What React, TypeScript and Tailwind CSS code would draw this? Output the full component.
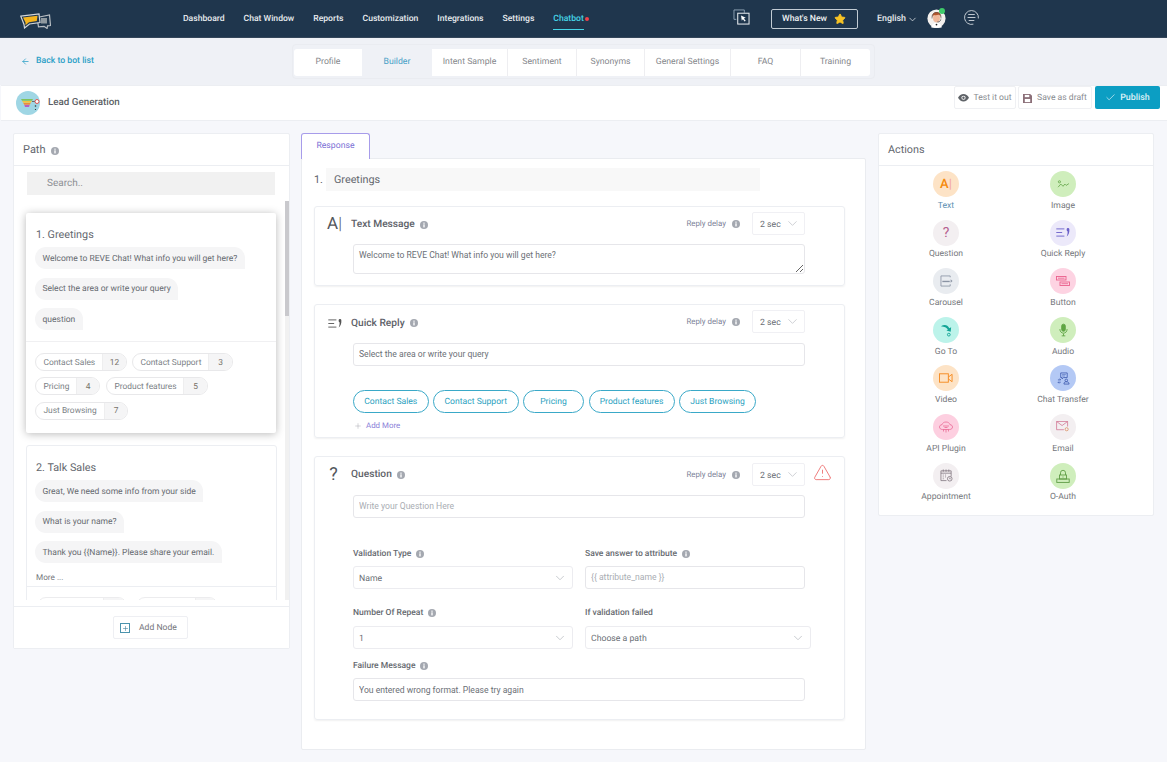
import React from 'react';
import { ArrowLeft, Check, ChevronDown, Plus, Star, TriangleAlert } from 'lucide-react';

const navItems = ['Dashboard', 'Chat Window', 'Reports', 'Customization', 'Integrations', 'Settings'];

const tabs = [
  { label: 'Profile', width: 'w-[68px]', active: false },
  { label: 'Builder', width: 'w-[70px]', active: true },
  { label: 'Intent Sample', width: 'w-[76px]', active: false },
  { label: 'Sentiment', width: 'w-[69px]', active: false },
  { label: 'Synonyms', width: 'w-[68px]', active: false },
  { label: 'General Settings', width: 'w-[86px]', active: false },
  { label: 'FAQ', width: 'w-[70px]', active: false },
  { label: 'Training', width: 'w-[69px]', active: false },
];

function Info({ className = '' }: { className?: string }) {
  return (
    <svg viewBox="0 0 12 12" className={`w-[8px] h-[8px] shrink-0 ${className}`}>
      <circle cx="6" cy="6" r="6" fill="#a4a8b0" />
      <rect x="5" y="5" width="2" height="4.6" fill="#fff" />
      <rect x="5" y="2.4" width="2" height="1.7" fill="#fff" />
    </svg>
  );
}

function QuickIcon({ color = '#555' }: { color?: string }) {
  return (
    <svg viewBox="0 0 16 10" className="w-[15px] h-[9px]" fill="none">
      <path d="M0 1h9M0 5h6.5M0 9h9" stroke={color} strokeWidth="1" />
      <path d="M11.500 1.500a1.500 1.500 0 113 0c.3 3.500-.8 6.500-3 8 .9-1.800 1.200-3.500 1-5.800-.7-.1-1-.9-1-2.200z" fill={color} />
    </svg>
  );
}

function Logo() {
  return (
    <svg viewBox="0 0 31 16" className="w-[31px] h-[16px]">
      <path d="M17 4.500L29.500 2l1 10.500-3 .4-.4 2.600-3-2.200-5.600.6z" fill="#1f364d" stroke="#b9bfc4" strokeWidth="1.200" />
      <rect x="21" y="5" width="6" height="5.500" fill="#8f999f" />
      <path d="M.8 3.200L19 .8l1 8.700-10.500 1.500-5 4-.5-3.500z" fill="#1f364d" stroke="#d5d8da" strokeWidth="1.200" />
      <path d="M3 4.500L17.500 2.800 16.800 8 9 9.300 5.500 12.300V9.500z" fill="#f6b51e" />
    </svg>
  );
}

function Avatar() {
  return (
    <svg viewBox="0 0 22 22" className="w-[19px] h-[19px]">
      <circle cx="11" cy="11" r="10.500" fill="#f4f1ee" />
      <path d="M5 21c0-4 3-5.500 6-5.500s6 1.500 6 5.500c-3.500 1.500-8.500 1.500-12 0z" fill="#fff" stroke="#ddd" strokeWidth=".4" />
      <ellipse cx="11" cy="10.500" rx="4" ry="5" fill="#efb89a" />
      <path d="M6.300 10c-.8-4.500 2-6.500 5-6.500 3.200 0 5.200 2.500 4.400 6.500-.3-2-1.300-3-2.500-3.300-1.700.6-3.700.6-5 .2-.9.6-1.600 1.600-1.900 3.100z" fill="#b5562b" />
      <path d="M5.800 11V9c0-6.500 10.400-6.500 10.400 0v2" fill="none" stroke="#555" strokeWidth=".7" />
      <path d="M16 12c-.5 2.500-2 3-4 3" fill="none" stroke="#333" strokeWidth=".8" />
      <circle cx="11" cy="18" r="1" fill="#222" />
    </svg>
  );
}

function LeadIcon() {
  return (
    <svg viewBox="0 0 24 24" className="w-[24px] h-[24px]">
      <circle cx="12" cy="12" r="12" fill="#9fd6e4" />
      <path d="M5 8h12l-1 1.800H6z" fill="#7fc25a" />
      <path d="M6.200 10h9.600l-.9 1.800H7.100z" fill="#f5c33b" />
      <path d="M7.300 12h7.400l-.9 1.800H8.200z" fill="#ee8a3a" />
      <path d="M8.400 14h5.200L13 16H9z" fill="#b65fc0" />
      <path d="M16 10.500h4" stroke="#444" strokeWidth=".7" />
      <circle cx="21" cy="10.500" r="2" fill="#fff" stroke="#e0544f" strokeWidth="1" />
      <circle cx="19.500" cy="15" r=".8" fill="#333" />
      <circle cx="19.500" cy="18.500" r=".6" fill="#222" />
    </svg>
  );
}

const actions: { label: string; bg: string; icon: React.ReactNode }[] = [
  {
    label: 'Text',
    bg: 'bg-[#fde3c6]',
    icon: <span className="font-medium text-[13px] leading-none text-[#f58a0c]">A<span className="text-[#f4a3a3] font-normal">|</span></span>,
  },
  {
    label: 'Image',
    bg: 'bg-[#cfeebc]',
    icon: (
      <svg viewBox="0 0 14 10" className="w-[13px] h-[9px]" fill="none" stroke="#63a548" strokeWidth=".9">
        <circle cx="2.500" cy="2" r="1.200" />
        <path d="M1 8l3-3.500 2.500 2.500 2-2.500 1.500 1.500 3-2" />
      </svg>
    ),
  },
  {
    label: 'Question',
    bg: 'bg-[#f3eff1]',
    icon: <span className="text-[14px] leading-none text-[#b55d8e]">?</span>,
  },
  { label: 'Quick Reply', bg: 'bg-[#ece9fa]', icon: <QuickIcon color="#6a5fc8" /> },
  {
    label: 'Carousel',
    bg: 'bg-[#e9ecf0]',
    icon: (
      <svg viewBox="0 0 14 13" className="w-[13px] h-[12px]" fill="none" stroke="#8a93a3" strokeWidth=".9">
        <path d="M11 2.500V1H1v11h10v-2" />
        <path d="M2.500 7h8" strokeWidth="1.500" />
        <path d="M11.500 4.500L13.500 6.500l-2 2z" fill="#8a93a3" stroke="none" />
      </svg>
    ),
  },
  {
    label: 'Button',
    bg: 'bg-[#fdd3e2]',
    icon: (
      <svg viewBox="0 0 14 10" className="w-[14px] h-[10px]" fill="none" stroke="#ea5f8c" strokeWidth=".9">
        <rect x=".5" y=".5" width="9.500" height="3.500" />
        <rect x="4" y="6" width="9.500" height="3.500" />
        <path d="M2 2.200h6.500M5.500 7.700H12" strokeWidth=".8" />
      </svg>
    ),
  },
  {
    label: 'Go To',
    bg: 'bg-[#bcf3ea]',
    icon: (
      <svg viewBox="0 0 14 14" className="w-[13px] h-[14px]" fill="none">
        <path d="M1 3c4-2.500 7-1.500 9 2l2-1-.5 5-4.500-1.500 1.500-1C7 4.500 5 3.500 1 3z" fill="#12a596" />
        <circle cx="9.500" cy="12" r="1.500" stroke="#12a596" strokeWidth="1" />
      </svg>
    ),
  },
  {
    label: 'Audio',
    bg: 'bg-[#cfeebc]',
    icon: (
      <svg viewBox="0 0 10 14" className="w-[9px] h-[14px]" fill="none" stroke="#5fa544" strokeWidth="1">
        <rect x="3" y=".5" width="4" height="8" rx="2" fill="#5fa544" />
        <path d="M1 6c0 6 8 6 8 0M5 11v2.500M3 13.500h4" />
      </svg>
    ),
  },
  {
    label: 'Video',
    bg: 'bg-[#fde3c6]',
    icon: (
      <svg viewBox="0 0 15 10" className="w-[14px] h-[10px]" fill="none" stroke="#f58a1f" strokeWidth="1">
        <rect x=".5" y=".5" width="9.500" height="9" />
        <path d="M10 4l4-3v8l-4-3" />
      </svg>
    ),
  },
  {
    label: 'Chat Transfer',
    bg: 'bg-[#b4c9f5]',
    icon: (
      <svg viewBox="0 0 14 14" className="w-[13px] h-[13px]" fill="none" stroke="#3e5bb0" strokeWidth=".9">
        <path d="M4 1h7v5H7L5.500 7.500V6H4z" />
        <path d="M5.500 2.800h4M5.500 4.300h3" strokeWidth=".6" />
        <circle cx="10" cy="9" r="1.400" />
        <path d="M7.500 13c0-2 1-2.500 2.500-2.500s3 .5 3 2.500z" />
        <path d="M1 8.500h3L2.800 7.200M4 11H1l1.200 1.300" />
      </svg>
    ),
  },
  {
    label: 'API Plugin',
    bg: 'bg-[#fdcfe0]',
    icon: (
      <svg viewBox="0 0 14 12" className="w-[14px] h-[12px]" fill="none" stroke="#ea6a96" strokeWidth=".8">
        <path d="M3.500 8.500C1.500 8.500.5 7.300.5 6S1.500 3.700 3 3.700C3.500 2 5 1 7 1s3.500 1 4 2.700c1.500 0 2.500 1 2.500 2.300S12.500 8.500 10.500 8.500z" />
        <path d="M4.500 8.500v2M7 8.500v3M9.500 8.500v2M4 5h6M5.500 6.500h3" />
      </svg>
    ),
  },
  {
    label: 'Email',
    bg: 'bg-[#f3eff1]',
    icon: (
      <svg viewBox="0 0 15 12" className="w-[14px] h-[11px]" fill="none" stroke="#cf6f8d" strokeWidth=".8">
        <path d="M8.500 9.500H.5V.5h12V6" />
        <path d="M.5 .5L6.500 5l6-4.500" />
        <circle cx="11.500" cy="9" r="1.700" stroke="#d98a5a" />
      </svg>
    ),
  },
  {
    label: 'Appointment',
    bg: 'bg-[#f3eff1]',
    icon: (
      <svg viewBox="0 0 14 14" className="w-[13px] h-[13px]" fill="none" stroke="#7a6f78" strokeWidth=".8">
        <path d="M7 12.500H1V2h11v6" />
        <path d="M1 4.500h11M3.500 .5v2.500M6.500 .5v2.500M9.500 .5v2.500" />
        <path d="M3 6.500h1M5.500 6.500h1M3 8.500h1M5.500 8.500h1M3 10.500h1" />
        <circle cx="10.500" cy="10.500" r="2.500" />
        <path d="M10.500 9.200v1.400h1" />
      </svg>
    ),
  },
  {
    label: 'O-Auth',
    bg: 'bg-[#cfeebc]',
    icon: (
      <svg viewBox="0 0 14 14" className="w-[14px] h-[14px]" fill="none" stroke="#5f9c46" strokeWidth=".9">
        <path d="M4.500 6V3.800a2.500 2.500 0 015 0V6" />
        <rect x="3.500" y="6" width="7" height="4" />
        <rect x=".8" y="10" width="12.400" height="3.400" />
        <path d="M7 7.500v1" />
      </svg>
    ),
  },
];

function Bubble({ children }: { children: React.ReactNode }) {
  return (
    <div className="w-fit h-[22px] px-[7.500px] pt-[2px] flex items-center bg-[#f5f5f6] rounded-[11px] rounded-br-none text-[8.500px] text-[#666a70]">
      {children}
    </div>
  );
}

function Chip({ label, count, width, split }: { label: string; count: number; width: string; split: string }) {
  return (
    <div className={`h-[18px] border border-[#e8e8ea] rounded-full flex overflow-hidden text-[8.400px] text-[#7b7f86] ${width}`}>
      <div className={`pl-[7.500px] pt-[2px] flex items-center shrink-0 ${split}`}>{label}</div>
      <div className="flex-1 pt-[2px] bg-[#f5f5f6] border-l border-[#eeeeef] flex items-center justify-center text-[#77736a]">{count}</div>
    </div>
  );
}

function DelaySelect() {
  return (
    <div className="w-[53px] h-[23px] border border-[#f0f0f4] rounded-[2px] flex items-center justify-between pl-[7px] pr-[4px] text-[8.700px] text-[#6b6f76] bg-white">
      <span className="pt-[5px]">2 sec</span>
      <ChevronDown className="w-[15px] h-[15px] text-[#c4c6cb]" strokeWidth={1.300} />
    </div>
  );
}

function ReplyDelay() {
  return (
    <div className="flex items-center">
      <span className="text-[7.900px] text-[#7d8298]">Reply delay</span>
      <Info className="ml-[6px] mr-[12px]" />
      <DelaySelect />
    </div>
  );
}

function CardHeading({ icon, title, offset = '' }: { icon: React.ReactNode; title: string; offset?: string }) {
  return (
    <div className={`flex items-center ${offset}`}>
      <div className="w-[36px] flex justify-center pl-[1px] text-[#555]">{icon}</div>
      <span className="text-[10.200px] font-medium text-[#5d6168]">{title}</span>
      <Info className="ml-[5.500px]" />
    </div>
  );
}

function FieldLabel({ children, info = true }: { children: React.ReactNode; info?: boolean }) {
  return (
    <div className="flex items-center h-[12px] text-[8.500px] font-medium text-[#666a70]">
      {children}
      {info && <Info className="ml-[5px]" />}
    </div>
  );
}

function SelectBox({ value, width }: { value: string; width: string }) {
  return (
    <div className={`h-[23px] border border-[#ececf0] rounded-[3px] flex items-center justify-between pl-[5px] pr-[5px] text-[8.700px] text-[#6b6f76] ${width}`}>
      <span className="pt-[4px]">{value}</span>
      <ChevronDown className="w-[14px] h-[14px] text-[#b8bbc1]" strokeWidth={1.300} />
    </div>
  );
}

const fieldClass = 'block h-[23px] px-[5px] border border-[#e6e6ea] rounded-[3px] bg-white text-[8.600px] text-[#6b6f76] outline-none placeholder:text-[#a9adb3]';

function Pill({ children, width }: { children: React.ReactNode; width: string }) {
  return (
    <div className={`h-[23px] pt-[2px] border border-[#3aa9c8] rounded-full flex items-center justify-center text-[8.600px] text-[#2a9fc0] ${width}`}>
      {children}
    </div>
  );
}

export default function App() {
  return (
    <div className="w-[1167px] h-[762px] overflow-hidden bg-[#f6f7fb] [font-family:Roboto,sans-serif] [text-rendering:geometricPrecision]">
      <header className="h-[38px] bg-[#1f364d] border-b border-[#34465a] relative">
        <div className="absolute left-[20px] top-[13px]"><Logo /></div>
        <nav className="ml-[183px] flex gap-[19px] h-[37px] pt-[2px] items-center text-[8.600px] font-medium text-[#e8ecef]">
          {navItems.map((item) => (
            <span key={item}>{item}</span>
          ))}
          <span className="relative text-[#46d4e6]">
            Chatbot
            <span className="absolute left-0 right-0 top-[16px] h-px bg-[#46d4e6]" />
          </span>
        </nav>
        <span className="absolute left-[584.500px] top-[16.500px] w-[4px] h-[4px] rounded-full bg-[#f0424a]" />
        <svg viewBox="0 0 18 17" className="absolute left-[733px] top-[8.500px] w-[17px] h-[16px]" fill="none">
          <path d="M3.500 11H1V1h11v3" stroke="#8fa3b5" strokeWidth="1" />
          <rect x="5" y="4.500" width="12" height="11.500" stroke="#e8ecef" strokeWidth="1.100" />
          <path d="M8.500 7l5 2.300-2 .7 2 2.500-1.200.9-1.800-2.500-1.200 1.600z" fill="#fff" />
        </svg>
        <div className="absolute left-[771px] top-[9px] w-[87px] h-[20px] border border-[#c2ccd4] rounded-[2px] flex items-center pl-[10px] text-[8.700px] font-medium text-[#eef1f3]">
          <span className="pt-[2px]">What's New</span>
          <Star className="w-[12px] h-[12px] ml-[7px] text-[#f7c325] fill-[#f7c325]" />
        </div>
        <div className="absolute left-[877px] top-[13.500px] h-[12px] flex items-center text-[8.900px] font-medium text-[#e8ecef]">
          English
          <ChevronDown className="w-[11px] h-[11px] ml-[1px]" strokeWidth={1.600} />
        </div>
        <div className="absolute left-[926.500px] top-[8.500px]"><Avatar /></div>
        <span className="absolute left-[939px] top-[8px] w-[6px] h-[6px] rounded-full bg-[#3ecb6a]" />
        <svg viewBox="0 0 16 16" className="absolute left-[964px] top-[10px] w-[15px] h-[15px]" fill="none" stroke="#dfe4e8" strokeWidth=".9">
          <path d="M10 15.100 A7.400 7.400 0 1 1 15.300 9" />
          <path d="M4.500 4.800h7M3.800 8h8.400M5 11.200h6" />
        </svg>
      </header>

      <div className="h-[47px] bg-[#eff1f6] relative">
        <div className="absolute left-[21px] top-[17.500px] flex items-center h-[12px] text-[8.700px] font-medium text-[#2a9fc6]">
          <ArrowLeft className="w-[9px] h-[9px] mr-[6px]" strokeWidth={2} />
          Back to bot list
        </div>
        <div className="absolute left-[292px] top-[6px] h-[35px] p-[4px] pl-[1px] border border-[#eaecf1] rounded-[4px] flex">
          {tabs.map((t, i) => (
            <div
              key={t.label}
              className={`${t.width} h-[27px] flex items-center justify-center text-[8.700px] ${t.active ? 'text-[#47a0c6]' : 'bg-white text-[#85878c]'} ${i > 1 && i < 7 ? 'border-r border-[#eeeef1]' : ''} ${i === 0 ? 'rounded-l-[3px]' : ''} ${i === 7 ? 'rounded-r-[3px]' : ''}`}
            >
              {t.label}
            </div>
          ))}
        </div>
      </div>

      <div className="h-[36px] ml-[1px] bg-white border-y border-[#eceef2] relative">
        <div className="absolute left-[15px] top-[5px]"><LeadIcon /></div>
        <span className="absolute left-[47px] top-[11px] text-[9.800px] leading-[12px] font-medium text-[#5c5f66]">Lead Generation</span>
        <div className="absolute left-[953px] top-[0px] flex items-start">
          <div className="w-[62px] h-[23px] pt-[1px] border border-[#eff0f3] rounded-[2px] bg-white flex items-center justify-center text-[8.600px] text-[#888b90]">
            <svg viewBox="0 0 12 8" className="w-[11px] h-[7.500px] mr-[4px]">
              <path d="M0 4c1.500-2.600 3.500-4 6-4s4.500 1.400 6 4c-1.500 2.600-3.500 4-6 4S1.500 6.600 0 4z" fill="#5f6368" />
              <circle cx="6" cy="4" r="2.300" fill="#fff" />
              <circle cx="6" cy="4" r="1.300" fill="#5f6368" />
            </svg>
            Test it out
          </div>
          <div className="w-[74px] h-[23px] pt-[1px] ml-[2px] border border-[#eff0f3] rounded-[2px] bg-white flex items-center justify-center text-[8.600px] text-[#888b90]">
            <svg viewBox="0 0 10 10" className="w-[9px] h-[9px] mr-[5px]">
              <path d="M0 0h8l2 2v8H0z" fill="#8b6f78" />
              <rect x="2" y="1" width="5" height="2.500" fill="#fff" />
              <rect x="2" y="5.500" width="6" height="3.500" fill="#fff" />
            </svg>
            Save as draft
          </div>
          <div className="w-[65px] h-[23px] ml-[3px] rounded-[2px] bg-[#0c9ec3] flex items-center justify-center text-[8.900px] font-medium text-[#dff2f7]">
            <Check className="w-[11px] h-[11px] mr-[4px]" strokeWidth={1.500} />
            <span className="pt-[2px]">Publish</span>
          </div>
        </div>
      </div>

      <div className="relative flex items-start pl-[13px] pt-[12px]">
        {/* path list */}
        <aside className="w-[277px] h-[516px] bg-white border border-[#eceef2] rounded-[2px] shrink-0 flex flex-col">
          <div className="h-[32px] pt-[2px] border-b border-[#eceef2] flex items-center pl-[9px] text-[11px] text-[#63676e]">
            Path
            <Info className="ml-[5px]" />
          </div>
          <div className="relative h-[440px] overflow-hidden">
            <div className="ml-[13px] mt-[6px] w-[248px] h-[23px] bg-[#f1f1f1] pl-[20px] flex items-center text-[10px] text-[#8d8f94]">Search..</div>
            <div className="absolute left-[271px] top-[35px] w-[4px] h-[400px] bg-[#f1f1f1]">
              <div className="h-[115px] bg-[#c9c9cd]" />
            </div>
            <div className="absolute left-[12px] top-[47px] w-[250px] h-[220px] bg-white rounded-[2px] shadow-[0_1px_8px_rgba(0,0,0,0.28)]">
              <div className="pl-[10px] pt-[15px] text-[10.800px] leading-[14px] text-[#63676e]">1. Greetings</div>
              <div className="pl-[9px] mt-[5px] flex flex-col gap-[8.500px]">
                <Bubble>Welcome to REVE Chat! What info you will get here?</Bubble>
                <Bubble>Select the area or write your query</Bubble>
                <Bubble>question</Bubble>
              </div>
              <div className="border-t border-[#f0f0f2] mt-[11px] pl-[9px] pt-[11px] flex flex-col gap-[6.400px]">
                <div className="flex gap-[5px]">
                  <Chip label="Contact Sales" count={12} width="w-[92px]" split="w-[66px]" />
                  <Chip label="Contact Support" count={3} width="w-[101px]" split="w-[75px]" />
                </div>
                <div className="flex gap-[6px]">
                  <Chip label="Pricing" count={4} width="w-[65px]" split="w-[40px]" />
                  <Chip label="Product features" count={5} width="w-[102px]" split="w-[76px]" />
                </div>
                <Chip label="Just Browsing" count={7} width="w-[93px]" split="w-[68px]" />
              </div>
            </div>
            <div className="absolute left-[12px] top-[279px] w-[251px] h-[200px] bg-white border border-[#eceef2] rounded-[3px]">
              <div className="pl-[9px] pt-[15px] text-[10.800px] leading-[14px] text-[#63676e]">2. Talk Sales</div>
              <div className="pl-[8px] mt-[5px] flex flex-col gap-[8.500px]">
                <Bubble>Great, We need some info from your side</Bubble>
                <Bubble>What is your name?</Bubble>
                <Bubble>Thank you {'{{Name}}'}. Please share your email.</Bubble>
              </div>
              <div className="pl-[9px] mt-[9px] h-[12px] leading-[12px] text-[8.200px] text-[#75777c]">More ...</div>
              <div className="border-t border-[#eceef2] mt-[2px] pl-[10px] pt-[10px] flex gap-[9px]">
                <div className="w-[90px] h-[18px] border border-[#ececee] rounded-full flex justify-end">
                  <div className="w-[23px] bg-[#f5f5f6] border-l border-[#eeeeef] rounded-r-full" />
                </div>
                <div className="w-[82px] h-[18px] border border-[#ececee] rounded-full flex justify-end">
                  <div className="w-[22px] bg-[#f5f5f6] border-l border-[#eeeeef] rounded-r-full" />
                </div>
              </div>
            </div>
            <div className="absolute left-0 right-0 bottom-0 h-[6px] bg-white" />
          </div>
          <div className="flex-1 bg-white border-t border-[#eceef2] relative z-10 flex justify-center items-start pt-[9px] pr-[2px]">
            <div className="w-[75px] h-[23px] pl-[6px] pt-[1px] border border-[#eeeff3] rounded-[2px] flex items-center text-[8.600px] text-[#75777c]">
              <span className="w-[10px] h-[10px] border border-[#4b93ad] flex items-center justify-center mr-[9px]">
                <Plus className="w-[7px] h-[7px] text-[#3f7f99]" strokeWidth={2} />
              </span>
              Add Node
            </div>
          </div>
        </aside>

        {/* response editor */}
        <main className="ml-[11px] w-[565px] shrink-0">
          <div className="w-[69px] h-[26px] border border-b-0 border-[#a79cea] rounded-t-[3px] bg-white flex items-center justify-center text-[8.700px] text-[#7c71d6] relative z-10">Response</div>
          <div className="h-[592px] -mt-px bg-white border border-[#eaecf0] rounded-[2px] pl-[12px]">
            <div className="flex items-center mt-[9px] h-[23px]">
              <span className="w-[12px] pt-[2px] text-[10.800px] text-[#5d6168]">1.</span>
              <div className="w-[434px] h-[23px] pt-[2px] bg-[#f8f8f8] pl-[8px] flex items-center text-[10.800px] text-[#63676e]">Greetings</div>
            </div>

            <section className="mt-[15px] w-[531px] h-[80px] border border-[#eceef2] rounded-[3px] shadow-[0_1px_2px_rgba(0,0,0,0.06)] relative">
              <div className="absolute left-0 top-[5px] right-[39px] h-[23px] flex items-center justify-between">
                <CardHeading
                  offset="mt-[2px]"
                  icon={<span className="ml-[2px] text-[17px] leading-none text-[#53565c]">A<span className="font-light">|</span></span>}
                  title="Text Message"
                />
                <ReplyDelay />
              </div>
              <textarea
                readOnly
                defaultValue="Welcome to REVE Chat! What info you will get here?"
                className="absolute left-[38px] top-[37px] w-[452px] h-[30px] px-[5px] py-[3px] border border-[#e6e6ea] rounded-[3px] text-[8.600px] leading-[14px] text-[#6b6f76] outline-none"
              />
            </section>

            <section className="mt-[18px] w-[531px] h-[134px] border border-[#eceef2] rounded-[3px] shadow-[0_1px_2px_rgba(0,0,0,0.06)] relative">
              <div className="absolute left-0 top-[5px] right-[39px] h-[23px] flex items-center justify-between">
                <CardHeading offset="mt-[4px]" icon={<span className="ml-[3px] flex"><QuickIcon color="#555" /></span>} title="Quick Reply" />
                <ReplyDelay />
              </div>
              <input readOnly defaultValue="Select the area or write your query" className={`${fieldClass} pb-[2px] absolute left-[38px] top-[38px] w-[452px]`} />
              <div className="absolute left-[38px] top-[85px] flex gap-[4.500px]">
                <Pill width="w-[75.500px]">Contact Sales</Pill>
                <Pill width="w-[85.500px]">Contact Support</Pill>
                <Pill width="w-[61px]">Pricing</Pill>
                <Pill width="w-[86px]">Product features</Pill>
                <Pill width="w-[77px]">Just Browsing</Pill>
              </div>
              <div className="absolute left-[39px] top-[115px] flex items-center h-[12px] text-[7.900px] text-[#8a80d8]">
                <Plus className="w-[8px] h-[8px] mr-[4px] text-[#9a9ca3]" strokeWidth={1.300} />
                Add More
              </div>
            </section>

            <section className="mt-[18px] w-[531px] h-[264px] border border-[#eceef2] rounded-[3px] shadow-[0_1px_2px_rgba(0,0,0,0.06)] relative">
              <div className="absolute left-0 top-[6px] right-[39px] h-[23px] flex items-center justify-between">
                <CardHeading icon={<span className="text-[18px] leading-none text-[#53565c]">?</span>} title="Question" />
                <ReplyDelay />
              </div>
              <TriangleAlert className="absolute left-[498px] top-[6px] w-[19px] h-[19px] text-[#ec6a6a]" strokeWidth={1.100} />
              <input readOnly placeholder="Write your Question Here" className={`${fieldClass} pb-[2px] absolute left-[38px] top-[38px] w-[452px]`} />

              <div className="absolute left-[38px] top-[91px]"><FieldLabel>Validation Type</FieldLabel></div>
              <div className="absolute left-[270px] top-[91px]"><FieldLabel>Save answer to attribute</FieldLabel></div>
              <div className="absolute left-[38px] top-[109px]"><SelectBox value="Name" width="w-[220px]" /></div>
              <input readOnly placeholder="{{ attribute_name }}" className={`${fieldClass} pb-[2px] absolute left-[270px] top-[109px] w-[220px]`} />

              <div className="absolute left-[38px] top-[150px]"><FieldLabel>Number Of Repeat</FieldLabel></div>
              <div className="absolute left-[270px] top-[150px]"><FieldLabel info={false}>If validation failed</FieldLabel></div>
              <div className="absolute left-[38px] top-[169px]"><SelectBox value="1" width="w-[220px]" /></div>
              <div className="absolute left-[270px] top-[169px]"><SelectBox value="Choose a path" width="w-[226px]" /></div>

              <div className="absolute left-[38px] top-[203px]"><FieldLabel>Failure Message</FieldLabel></div>
              <input readOnly defaultValue="You entered wrong format. Please try again" className={`${fieldClass} absolute left-[38px] top-[221px] w-[452px]`} />
            </section>
          </div>
        </main>

        {/* actions */}
        <aside className="ml-[12px] w-[276px] h-[383px] bg-white border border-[#eceef2] rounded-[2px] shrink-0">
          <div className="h-[32px] pt-[2px] border-b border-[#eceef2] flex items-center pl-[9px] text-[10.800px] text-[#63676e]">Actions</div>
          <div className="grid grid-cols-[117px_117px] pl-[8.500px] pt-[5px]">
            {actions.map((a) => (
              <div key={a.label} className="h-[48.600px] flex flex-col items-center">
                <div className={`w-[26px] h-[26px] rounded-full flex items-center justify-center ${a.bg}`}>{a.icon}</div>
                <span className={`mt-[1.800px] text-[8.600px] leading-[14px] ${a.label === 'Text' ? 'text-[#5b8eb0]' : 'text-[#75777c]'}`}>{a.label}</span>
              </div>
            ))}
          </div>
        </aside>
      </div>
    </div>
  );
}
